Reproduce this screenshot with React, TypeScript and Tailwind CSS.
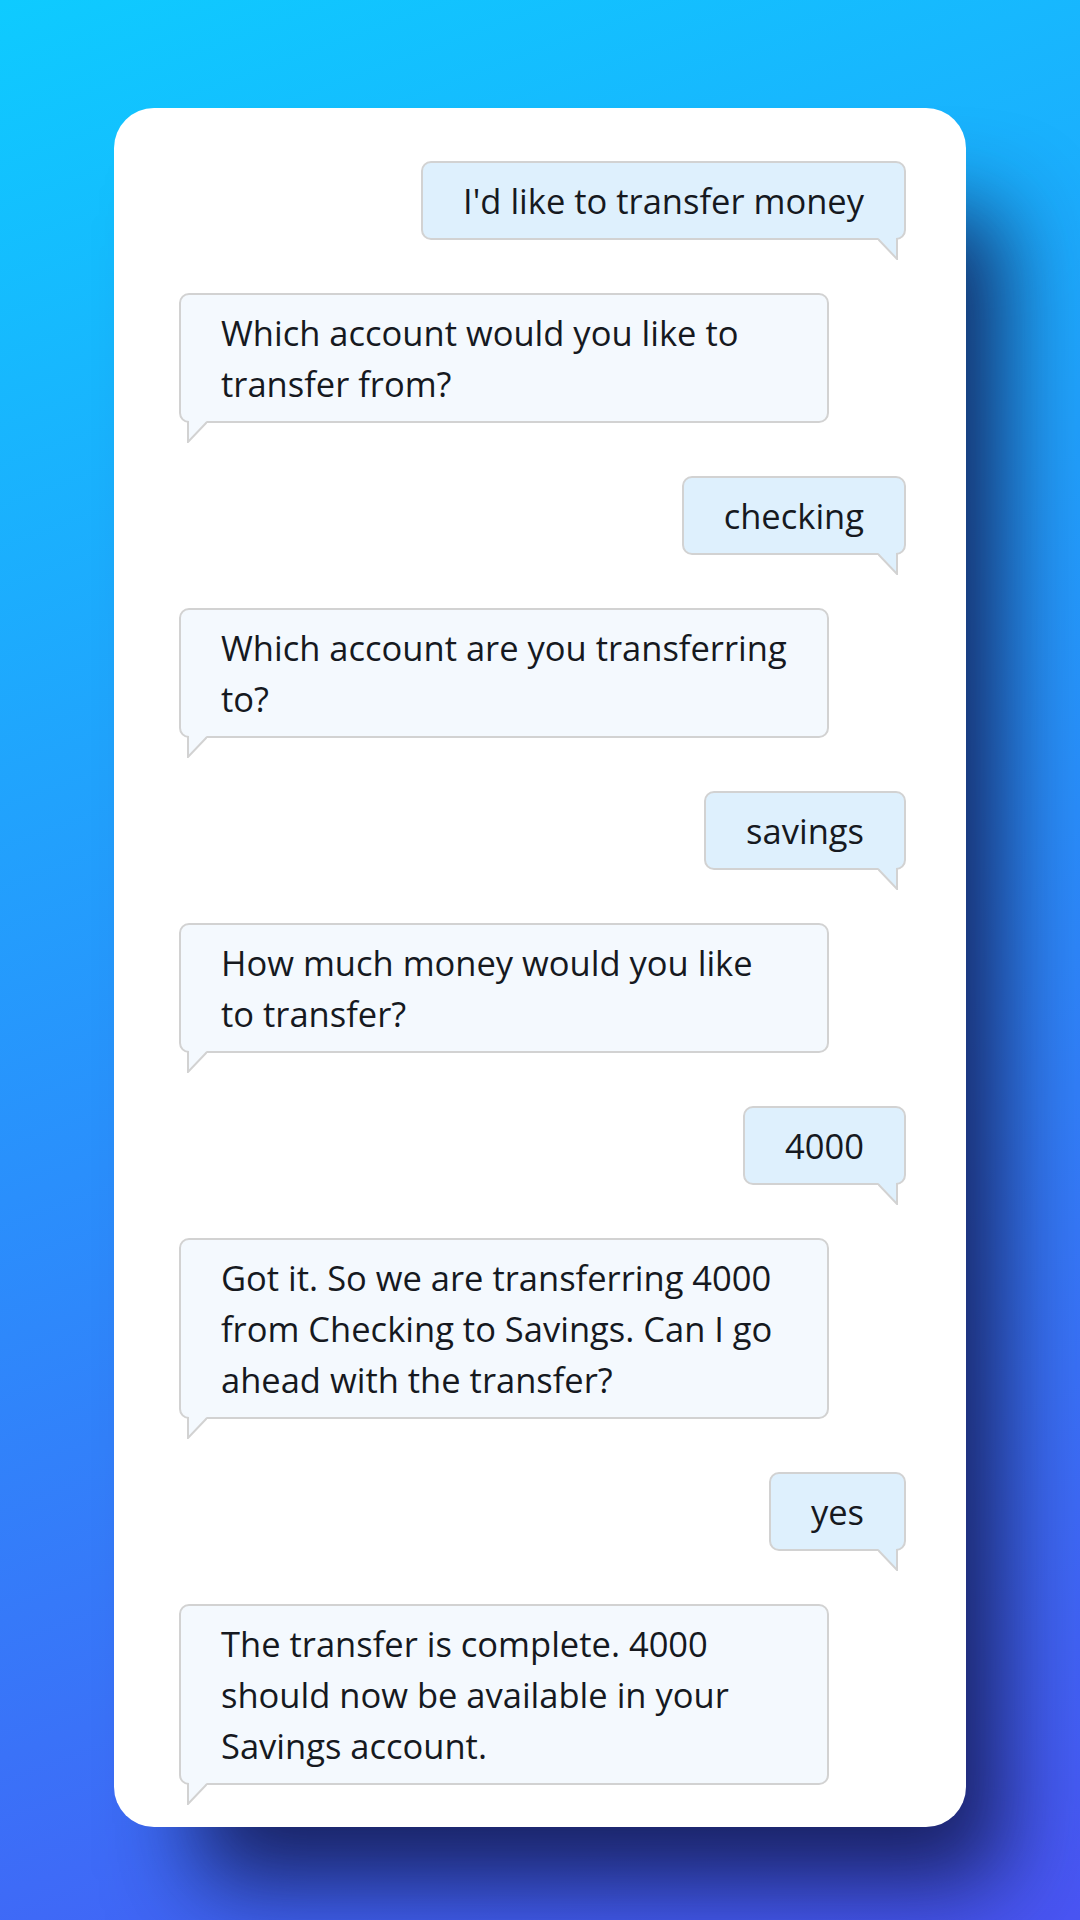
import React from "react";

type Message = { from: "user" | "bot"; text: string };

const messages: Message[] = [
  { from: "user", text: "I'd like to transfer money" },
  { from: "bot", text: "Which account would you like to transfer from?" },
  { from: "user", text: "checking" },
  { from: "bot", text: "Which account are you transferring to?" },
  { from: "user", text: "savings" },
  { from: "bot", text: "How much money would you like to transfer?" },
  { from: "user", text: "4000" },
  {
    from: "bot",
    text: "Got it. So we are transferring 4000 from Checking to Savings. Can I go ahead with the transfer?",
  },
  { from: "user", text: "yes" },
  {
    from: "bot",
    text: "The transfer is complete. 4000 should now be available in your Savings account.",
  },
];

function Tail({ side, fill }: { side: "left" | "right"; fill: string }) {
  if (side === "right") {
    return (
      <svg
        className="absolute right-[5px] top-full"
        width="21"
        height="22"
        viewBox="0 0 21 22"
      >
        <path d="M0 0 H20 V21 Z" fill={fill} />
        <path d="M0 1 L19 21 V0" fill="none" stroke="#d2d2d2" strokeWidth="2" />
      </svg>
    );
  }
  return (
    <svg
      className="absolute left-[5px] top-full"
      width="21"
      height="22"
      viewBox="0 0 21 22"
    >
      <path d="M21 0 H1 V21 Z" fill={fill} />
      <path d="M21 1 L2 21 V0" fill="none" stroke="#d2d2d2" strokeWidth="2" />
    </svg>
  );
}

function Bubble({ message }: { message: Message }) {
  if (message.from === "user") {
    return (
      <div className="flex justify-end">
        <div className="relative rounded-[10px] border-2 border-[#d2d2d2] bg-[#def0fd] px-10 py-3">
          {message.text}
          <Tail side="right" fill="#def0fd" />
        </div>
      </div>
    );
  }
  return (
    <div className="flex justify-start">
      <div className="relative w-[650px] rounded-[10px] border-2 border-[#d2d2d2] bg-[#f4f9fe] px-10 py-3">
        {message.text}
        <Tail side="left" fill="#f4f9fe" />
      </div>
    </div>
  );
}

export default function App() {
  return (
    <div className="flex h-[1920px] w-[1080px] justify-center overflow-hidden bg-[linear-gradient(160deg,#0ecbff_0%,#2a8ffc_52%,#4a55f4_100%)] pt-[108px]">
      <div
        className="flex h-fit w-[852px] flex-col gap-[53px] rounded-[40px] bg-white pb-[42px] pl-[65px] pr-[60px] pt-[53px]
          text-[34.5px] leading-[51px] text-[#16191f] shadow-[60px_80px_90px_-25px_rgba(20,26,80,0.9)]"
        style={{ fontFamily: '"Open Sans", "Noto Sans", sans-serif' }}
      >
        {messages.map((m, i) => (
          <Bubble key={i} message={m} />
        ))}
      </div>
    </div>
  );
}
